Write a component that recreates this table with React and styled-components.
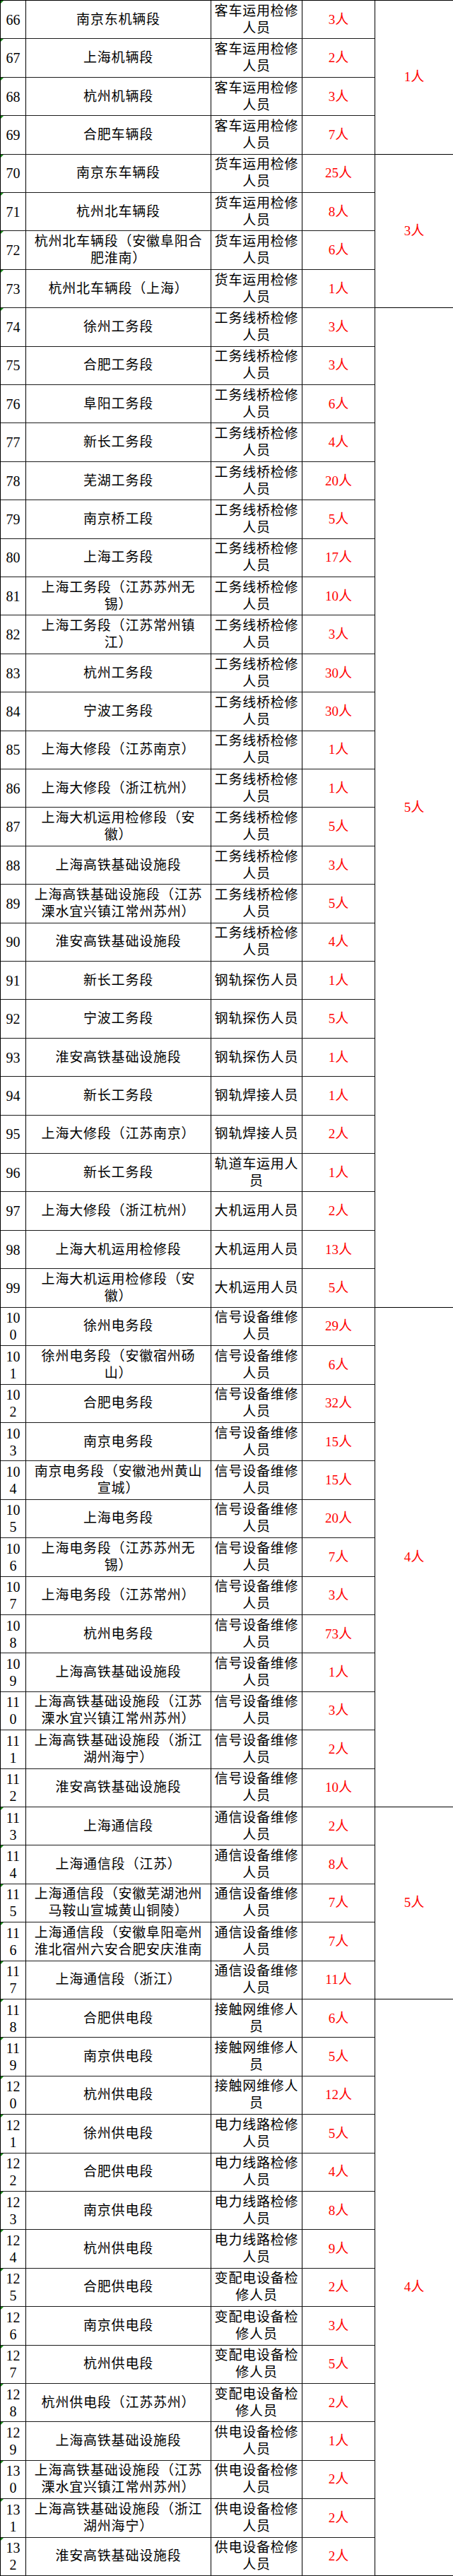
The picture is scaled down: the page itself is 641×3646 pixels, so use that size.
import React from 'react';
import styled, { createGlobalStyle } from 'styled-components';

const GlobalStyle = createGlobalStyle`
  html, body {
    margin: 0;
    padding: 0;
    background: #fff;
  }
  body {
    font-family: "Liberation Serif", "Noto Sans CJK SC", serif;
  }
`;

const Sheet = styled.div`
  display: grid;
  grid-template-columns: 36px 262px 129px 103px 110px;
  grid-template-rows: repeat(${(p) => p.$rows}, 1fr);
  width: 641px;
  height: 3646px;
  box-sizing: border-box;
  border-top: 1px solid #000;
  border-left: 1px solid #000;
  font-size: 19px;
  line-height: 24px;
  color: #000;
`;

const Cell = styled.div`
  display: flex;
  align-items: center;
  justify-content: center;
  text-align: center;
  box-sizing: border-box;
  min-height: 0;
  overflow: hidden;
  border-right: 1px solid #000;
  border-bottom: 1px solid #1c1c1c;
`;

const IndexCell = styled(Cell)`
  position: relative;
  padding: 0 4px;
  font-size: 20px;
  word-break: break-all;

  &::before {
    content: '';
    display: ${(p) => (p.$flag ? 'block' : 'none')};
    position: absolute;
    top: 0;
    left: 0;
    border-top: 4px solid #188a18;
    border-right: 4px solid transparent;
  }
`;

const NameCell = styled(Cell)`
  padding: 0 8px;
  letter-spacing: 0.8px;
`;

const JobCell = styled(Cell)`
  padding: 0 4px;
  letter-spacing: 0.8px;
`;

const CountCell = styled(Cell)`
  color: #ff0000;
`;

const GroupCell = styled(Cell)`
  grid-column: 5;
  grid-row: ${(p) => p.$start} / span ${(p) => p.$span};
  border-right: none;
  border-bottom: 1px solid #000;
  color: #ff0000;
`;

const names = [
  '南京东机辆段', '上海机辆段', '杭州机辆段', '合肥车辆段', '南京东车辆段',
  '杭州北车辆段', '杭州北车辆段（安徽阜阳合肥淮南）', '杭州北车辆段（上海）',
  '徐州工务段', '合肥工务段', '阜阳工务段', '新长工务段', '芜湖工务段', '南京桥工段',
  '上海工务段', '上海工务段（江苏苏州无锡）', '上海工务段（江苏常州镇江）', '杭州工务段',
  '宁波工务段', '上海大修段（江苏南京）', '上海大修段（浙江杭州）', '上海大机运用检修段（安徽）',
  '上海高铁基础设施段', '上海高铁基础设施段（江苏溧水宜兴镇江常州苏州）', '淮安高铁基础设施段',
  '新长工务段', '宁波工务段', '淮安高铁基础设施段', '新长工务段', '上海大修段（江苏南京）',
  '新长工务段', '上海大修段（浙江杭州）', '上海大机运用检修段', '上海大机运用检修段（安徽）',
  '徐州电务段', '徐州电务段（安徽宿州砀山）', '合肥电务段', '南京电务段',
  '南京电务段（安徽池州黄山宣城）', '上海电务段', '上海电务段（江苏苏州无锡）',
  '上海电务段（江苏常州）', '杭州电务段', '上海高铁基础设施段',
  '上海高铁基础设施段（江苏溧水宜兴镇江常州苏州）', '上海高铁基础设施段（浙江湖州海宁）',
  '淮安高铁基础设施段', '上海通信段', '上海通信段（江苏）',
  '上海通信段（安徽芜湖池州马鞍山宣城黄山铜陵）', '上海通信段（安徽阜阳亳州淮北宿州六安合肥安庆淮南',
  '上海通信段（浙江）', '合肥供电段', '南京供电段', '杭州供电段', '徐州供电段', '合肥供电段',
  '南京供电段', '杭州供电段', '合肥供电段', '南京供电段', '杭州供电段', '杭州供电段（江苏苏州）',
  '上海高铁基础设施段', '上海高铁基础设施段（江苏溧水宜兴镇江常州苏州）',
  '上海高铁基础设施段（浙江湖州海宁）', '淮安高铁基础设施段',
];

const counts = [
  3, 2, 3, 7, 25, 8, 6, 1, 3, 3, 6, 4, 20, 5, 17, 10, 3, 30, 30, 1, 1, 5, 3, 5, 4,
  1, 5, 1, 1, 2, 1, 2, 13, 5, 29, 6, 32, 15, 15, 20, 7, 3, 73, 1, 3, 2, 10, 2, 8, 7,
  7, 11, 6, 5, 12, 5, 4, 8, 9, 2, 3, 5, 2, 1, 2, 2, 2,
];

// [job title, number of rows]
const jobs = [
  ['客车运用检修人员', 4],
  ['货车运用检修人员', 4],
  ['工务线桥检修人员', 17],
  ['钢轨探伤人员', 3],
  ['钢轨焊接人员', 2],
  ['轨道车运用人员', 1],
  ['大机运用人员', 3],
  ['信号设备维修人员', 13],
  ['通信设备维修人员', 5],
  ['接触网维修人员', 3],
  ['电力线路检修人员', 4],
  ['变配电设备检修人员', 4],
  ['供电设备检修人员', 4],
];

// merged right column: [label, number of rows]
const groups = [
  ['1人', 4],
  ['3人', 4],
  ['5人', 26],
  ['4人', 13],
  ['5人', 5],
  ['4人', 15],
];

const jobList = jobs.flatMap(([title, n]) => Array(n).fill(title));

const rows = names.map((name, i) => {
  const no = 66 + i;
  return {
    no,
    name,
    job: jobList[i],
    count: counts[i],
    flag: no <= 74 || no >= 113,
  };
});

let cursor = 1;
const groupCells = groups.map(([label, span]) => {
  const g = { label, start: cursor, span };
  cursor += span;
  return g;
});

export default function App() {
  return (
    <>
      <GlobalStyle />
      <Sheet $rows={rows.length}>
        {groupCells.map((g) => (
          <GroupCell key={g.start} $start={g.start} $span={g.span}>
            {g.label}
          </GroupCell>
        ))}
        {rows.map((r) => (
          <React.Fragment key={r.no}>
            <IndexCell $flag={r.flag}>{r.no}</IndexCell>
            <NameCell>{r.name}</NameCell>
            <JobCell>{r.job}</JobCell>
            <CountCell>{r.count}人</CountCell>
          </React.Fragment>
        ))}
      </Sheet>
    </>
  );
}
